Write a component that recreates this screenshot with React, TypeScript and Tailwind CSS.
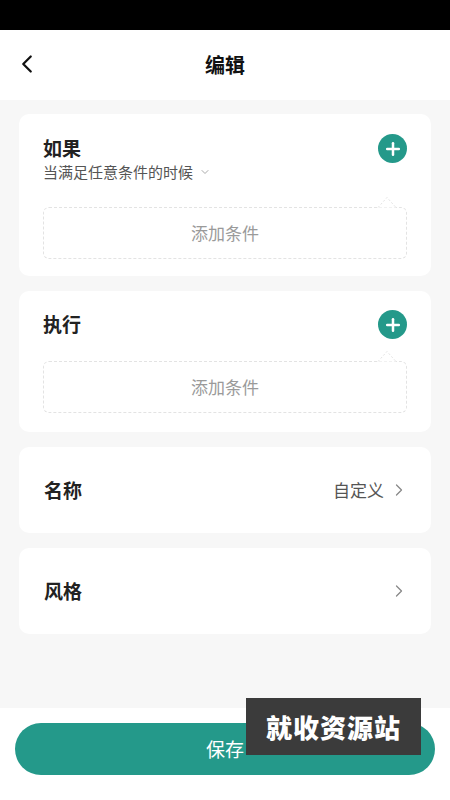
import { ChevronLeft, ChevronRight, ChevronDown, Plus } from 'lucide-react'

const FONT = { fontFamily: '"Noto Sans CJK SC", "Noto Sans", sans-serif' }

function AddButton() {
  return (
    <div className="size-[29px] rounded-full bg-[#24998a] flex items-center justify-center">
      <Plus className="size-[20px] text-white" strokeWidth={3} />
    </div>
  )
}

function DashedBox() {
  return (
    <div className="relative">
      <svg
        className="absolute right-[10px] -top-[11px]"
        width="20"
        height="12"
        viewBox="0 0 20 12"
      >
        <path d="M1 11.5 L10 1.5 L19 11.5" fill="white" stroke="#e3e3e3" strokeDasharray="2 2" />
      </svg>
      <div className="h-[52px] border border-dashed border-[#e3e3e3] rounded-[6px] flex items-center justify-center text-[17px] text-[#9a9a9a]">
        添加条件
      </div>
    </div>
  )
}

function RuleCard({ title, sub }: { title: string; sub?: boolean }) {
  return (
    <div
      className={
        sub
          ? 'bg-white rounded-[10px] px-[24px] pt-[20px] pb-[17px]'
          : 'bg-white rounded-[10px] px-[24px] pt-[19px] pb-[19px]'
      }
    >
      <div className="flex justify-between items-start">
        <div>
          <div className="text-[19px] font-bold text-[#222] leading-[28px]">{title}</div>
          {sub && (
            <div className="flex items-center gap-[6px] text-[15px] text-[#555] leading-[20px]">
              当满足任意条件的时候
              <ChevronDown className="size-[12px] text-[#aaa]" />
            </div>
          )}
        </div>
        <AddButton />
      </div>
      <div className={sub ? 'mt-[25px]' : 'mt-[22px]'}>
        <DashedBox />
      </div>
    </div>
  )
}

function RowCard({ title, value }: { title: string; value?: string }) {
  return (
    <div className="bg-white rounded-[10px] h-[86px] pl-[25px] pr-[22px] flex items-center justify-between">
      <span className="text-[19px] font-bold text-[#222]">{title}</span>
      <div className="flex items-center gap-[5px] text-[17px] text-[#555]">
        {value && <span>{value}</span>}
        <ChevronRight className="size-[20px] text-[#888]" strokeWidth={1.5} />
      </div>
    </div>
  )
}

export default function App() {
  return (
    <div className="w-[450px] h-[800px] bg-white flex flex-col relative overflow-hidden" style={FONT}>
      <div className="h-[30px] bg-black shrink-0" />
      <header className="h-[70px] shrink-0 relative flex items-center justify-center">
        <ChevronLeft className="absolute left-[12px] top-[19px] size-[30px] text-[#111]" strokeWidth={1.8} />
        <span className="text-[20px] font-bold text-[#111]">编辑</span>
      </header>
      <main className="h-[608px] shrink-0 bg-[#f7f7f7] px-[19px] pt-[14px] flex flex-col gap-[15px]">
        <RuleCard title="如果" sub />
        <RuleCard title="执行" />
        <RowCard title="名称" value="自定义" />
        <RowCard title="风格" />
      </main>
      <div className="px-[15px] pt-[15px]">
        <button className="w-full h-[52px] rounded-full bg-[#24998a] text-white text-[19px]">保存</button>
      </div>
      <div className="absolute left-[246px] top-[698px] w-[175px] h-[57px] bg-[#3b3b3b] flex items-center justify-center text-white text-[26px] font-black tracking-[1px]">
        就收资源站
      </div>
    </div>
  )
}
